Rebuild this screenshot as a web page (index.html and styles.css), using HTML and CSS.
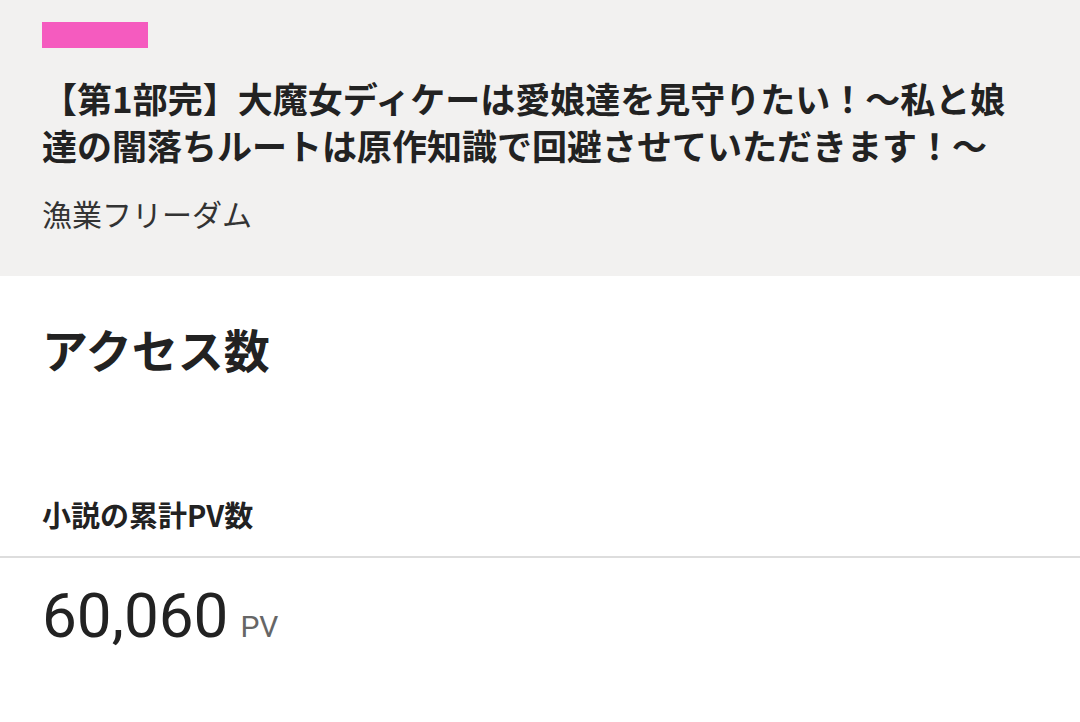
FILE: index.html
```html
<!DOCTYPE html>
<html lang="ja">
<head>
<meta charset="utf-8">
<link rel="stylesheet" href="styles.css">
</head>
<body>
<header class="work-header">
  <div class="tag-bar"></div>
  <h1 class="work-title">【第1部完】大魔女ディケーは愛娘達を見守りたい！〜私と娘達の闇落ちルートは原作知識で回避させていただきます！〜</h1>
  <p class="work-author">漁業フリーダム</p>
</header>
<main class="access">
  <h2 class="access-title">アクセス数</h2>
  <h3 class="stat-label">小説の累計PV数</h3>
  <div class="stat-value"><span class="num">60,060</span><span class="unit">PV</span></div>
</main>
</body>
</html>
```
FILE: styles.css
```css
html, body {
  margin: 0;
  padding: 0;
  background: #ffffff;
}
body {
  font-family: "Noto Sans CJK JP", "Noto Sans", sans-serif;
  color: #222222;
}
.work-header {
  background: #f2f1f0;
  padding: 22px 42px 0 42px;
  height: 254px;
}
.tag-bar {
  width: 106px;
  height: 26px;
  background: #f55bbf;
}
.work-title {
  margin: 26px 0 0 0;
  font-size: 35px;
  line-height: 47px;
  font-weight: 700;
  color: #222222;
}
.work-author {
  margin: 25px 0 0 0;
  font-size: 30px;
  line-height: 40px;
  font-weight: 400;
  color: #333333;
}
.access {
  padding: 0;
}
.access-title {
  margin: 0;
  padding: 42px 42px 0 42px;
  font-size: 46px;
  line-height: 60px;
  font-weight: 700;
}
.stat-label {
  margin: 0;
  padding: 116px 42px 22px 42px;
  font-size: 29px;
  line-height: 40px;
  font-weight: 700;
  border-bottom: 2px solid #dddddd;
}
.stat-value {
  padding: 20px 42px;
  display: flex;
  align-items: baseline;
  gap: 12px;
}
.num {
  font-family: Roboto, "Noto Sans", sans-serif;
  font-size: 62px;
  line-height: 76px;
  color: #222222;
}
.unit {
  font-family: Roboto, "Noto Sans", sans-serif;
  font-size: 30px;
  color: #666666;
}
```
